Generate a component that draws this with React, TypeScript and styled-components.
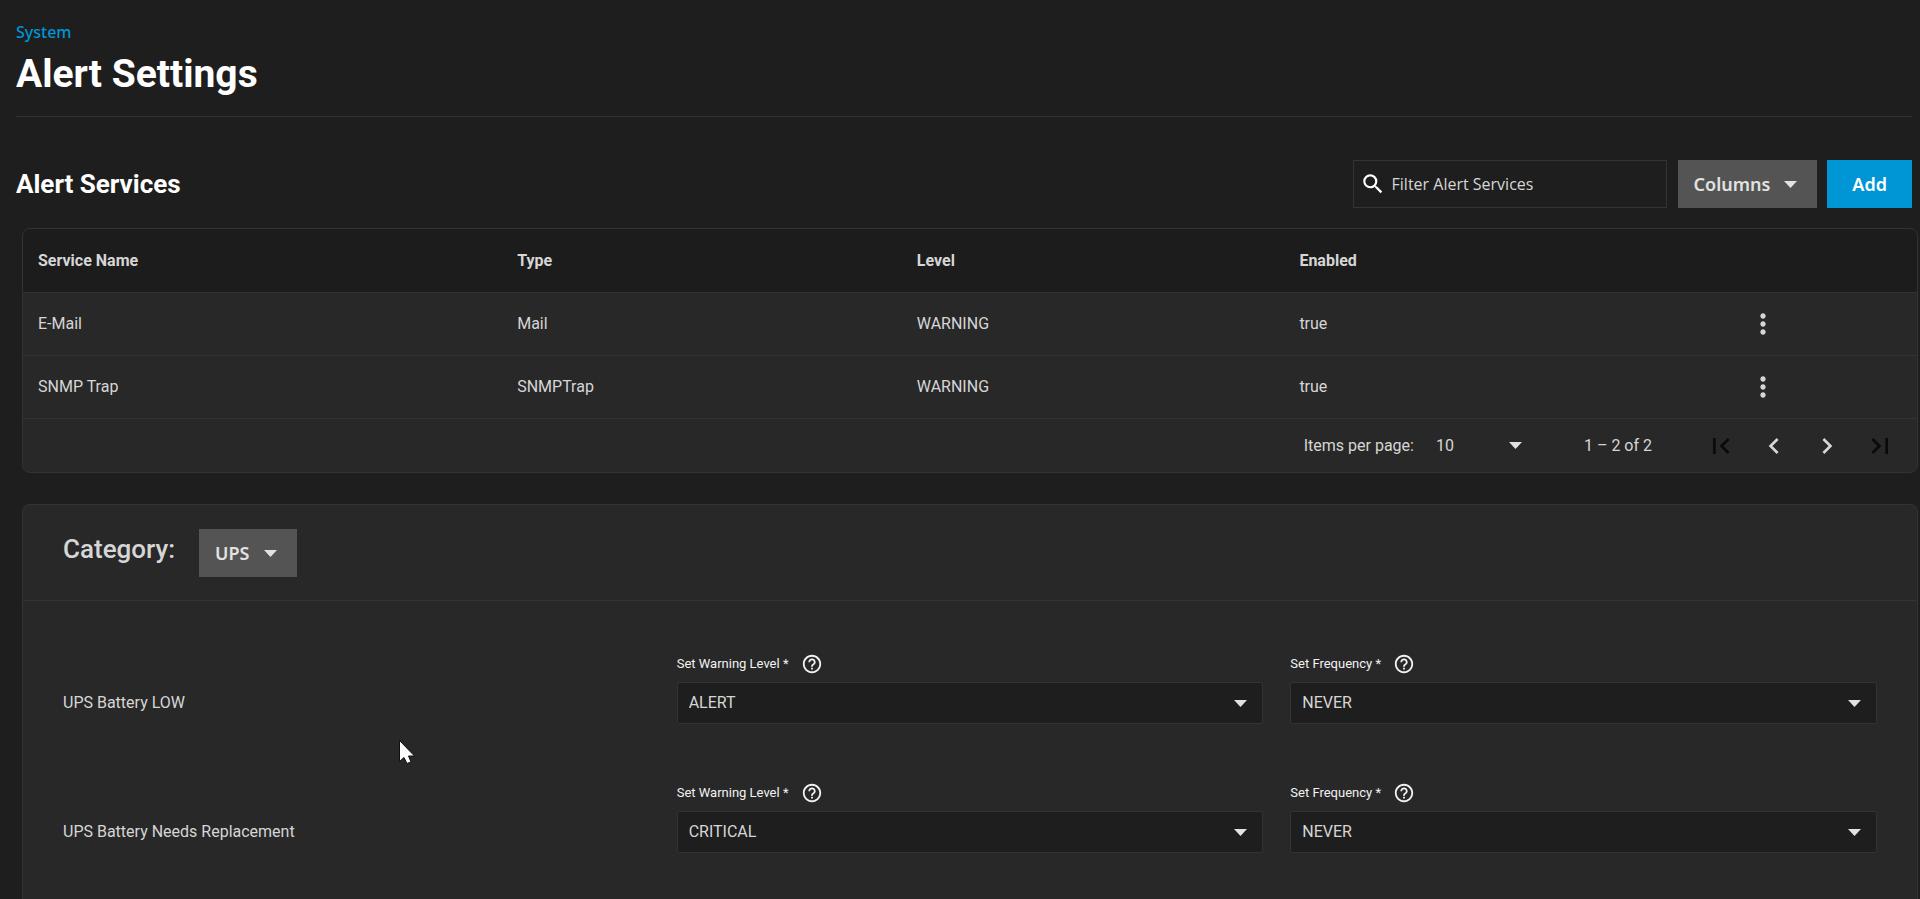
import React, { useId } from "react";
import styled, { createGlobalStyle } from "styled-components";
import {
  MdChevronLeft,
  MdChevronRight,
  MdFirstPage,
  MdHelpOutline,
  MdLastPage,
  MdMoreVert,
  MdSearch,
} from "react-icons/md";

const color = {
  page: "#1e1e1e",
  card: "#282828",
  head: "#1c1c1c",
  line: "#333333",
  text: "#d6d6d6",
  bright: "#ffffff",
  button: "#545454",
  primary: "#0095d5",
  disabled: "#0a0a0a",
};

const uiFont = `"Noto Sans", "Open Sans", sans-serif`;

const GlobalStyle = createGlobalStyle`
  * { box-sizing: border-box; }
  body {
    margin: 0;
    background: ${color.page};
    color: ${color.text};
    font: 16px/24px Roboto, sans-serif;
  }
  h1, h2, h3 { margin: 0; }
  button, select, input { font: inherit; color: inherit; margin: 0; }
  button, select { cursor: pointer; }
`;

const Page = styled.main`
  position: relative;
  display: flex;
  flex-direction: column;
  min-height: 100vh;
`;

const PageHeader = styled.header`
  display: flex;
  flex-direction: column;
  align-items: flex-start;
  margin: 0 8px 0 16px;
  padding: 20px 0 18px;
  border-bottom: 1px solid ${color.line};
`;

const Breadcrumb = styled.a`
  font-family: ${uiFont};
  font-weight: 500;
  color: ${color.primary};
  text-decoration: none;
`;

const PageTitle = styled.h1`
  padding-top: 6px;
  color: ${color.bright};
  font-size: 39px;
  line-height: 48px;
  font-weight: 700;
`;

const Toolbar = styled.div`
  display: flex;
  align-items: center;
  margin: 43px 8px 20px 16px;
`;

const SectionTitle = styled.h2`
  flex: 1;
  color: ${color.bright};
  font-size: 26px;
  line-height: 32px;
  font-weight: 700;
`;

const SearchBox = styled.label`
  display: flex;
  align-items: center;
  gap: 6px;
  width: 314px;
  height: 48px;
  margin-right: 11px;
  padding: 0 8px 0 6px;
  border: 1px solid ${color.line};
  color: ${color.bright};
`;

const SearchInput = styled.input`
  flex: 1;
  min-width: 0;
  padding: 0;
  border: 0;
  outline: 0;
  background: none;
  font-family: "Open Sans", "Noto Sans", sans-serif;
  &::placeholder {
    color: ${color.text};
    opacity: 1;
  }
`;

const ToolbarButton = styled.button<{ $primary?: boolean }>`
  display: flex;
  align-items: center;
  justify-content: space-between;
  height: 48px;
  padding: ${(p) => (p.$primary ? "0 25px" : "0 20px 0 16px")};
  margin-left: ${(p) => (p.$primary ? "10px" : "0")};
  gap: 14px;
  border: 0;
  background: ${(p) => (p.$primary ? color.primary : color.button)};
  color: ${(p) => (p.$primary ? color.bright : "#e2e2e2")};
  font-family: ${uiFont};
  font-size: 18px;
  font-weight: 600;
`;

const Cards = styled.div`
  flex: 1;
  display: flex;
  flex-direction: column;
  gap: 31px;
  margin: 0 2px 0 22px;
`;

const Card = styled.section<{ $fill?: boolean }>`
  border: 1px solid ${color.line};
  border-radius: ${(p) => (p.$fill ? "8px 8px 0 0" : "8px")};
  border-bottom-width: ${(p) => (p.$fill ? "0" : "1px")};
  flex: ${(p) => (p.$fill ? "1" : "none")};
  background: ${color.card};
  overflow: hidden;
`;

const Table = styled.table`
  width: 100%;
  table-layout: fixed;
  border-collapse: separate;
  border-spacing: 0;
  text-align: left;
`;

const HeadCell = styled.th<{ $width?: string }>`
  width: ${(p) => p.$width ?? "auto"};
  height: 64px;
  padding: 0 15px;
  border-bottom: 1px solid ${color.line};
  background: ${color.head};
  font-weight: 700;
`;

const Cell = styled.td`
  height: 63px;
  padding: 0 15px;
  border-bottom: 1px solid ${color.line};
`;

const IconButton = styled.button`
  display: flex;
  align-items: center;
  justify-content: center;
  width: 48px;
  height: 40px;
  padding: 0;
  border: 0;
  background: none;
`;

const PageButton = styled(IconButton)`
  width: 53px;
  &:disabled {
    color: ${color.disabled};
    cursor: default;
  }
`;

const Paginator = styled.nav`
  display: flex;
  align-items: center;
  justify-content: flex-end;
  height: 53px;
  padding-right: 11px;
`;

const PageSize = styled.label`
  display: flex;
  align-items: center;
  gap: 22px;
  margin-right: 62px;
`;

const PageRange = styled.span`
  margin-right: 42px;
`;

const SelectFrame = styled.span`
  display: grid;
  align-items: center;
  & > * {
    grid-area: 1 / 1;
  }
`;

const PlainSelect = styled.select`
  appearance: none;
  width: 86px;
  padding: 0;
  border: 0;
  outline: 0;
  background: none;
`;

const CategorySelect = styled.select`
  appearance: none;
  height: 48px;
  padding: 0 47px 0 16px;
  border: 0;
  border-radius: 0;
  outline: 0;
  background: ${color.button};
  color: #e2e2e2;
  font-family: ${uiFont};
  font-size: 18px;
  font-weight: 600;
`;

const FieldSelect = styled.select`
  appearance: none;
  width: 100%;
  height: 42px;
  padding: 0 40px 0 11px;
  border: 1px solid ${color.line};
  border-radius: 2px;
  outline: 0;
  background: ${color.page};
`;

const Caret = styled.svg<{ $inset: string }>`
  justify-self: end;
  width: 13px;
  height: 7px;
  margin-right: ${(p) => p.$inset};
  fill: #e2e2e2;
  pointer-events: none;
`;

const CategoryBar = styled.div`
  display: flex;
  align-items: flex-start;
  gap: 24px;
  padding: 24px 40px 23px;
  border-bottom: 1px solid ${color.line};
`;

const CategoryLabel = styled.label`
  font-size: 26px;
  line-height: 40px;
  font-weight: 500;
`;

const AlertList = styled.div`
  display: flex;
  flex-direction: column;
  gap: 58px;
  padding: 52px 40px 44px;
`;

const AlertRow = styled.div`
  display: grid;
  grid-template-columns: repeat(3, 1fr);
  column-gap: 27px;
  align-items: end;
`;

const AlertName = styled.h3`
  font-size: 16px;
  line-height: 42px;
  font-weight: 400;
`;

const Field = styled.div`
  display: flex;
  flex-direction: column;
  gap: 7px;
`;

const FieldLabel = styled.div`
  display: flex;
  align-items: center;
  gap: 12px;
  color: #f2f2f2;
  font-size: 13px;
  line-height: 22px;
`;

const HelpButton = styled.button`
  display: flex;
  padding: 0;
  border: 0;
  background: none;
`;

const Pointer = styled.svg`
  position: absolute;
  left: 398px;
  top: 739px;
  width: 18px;
  height: 26px;
  pointer-events: none;
`;

const DropCaret = ({ inset = "0" }: { inset?: string }) => (
  <Caret $inset={inset} viewBox="0 0 26 14" aria-hidden="true">
    <path d="M0 0h26L13 14z" />
  </Caret>
);

const columns = [
  { title: "Service Name", width: "25.3%" },
  { title: "Type", width: "21.1%" },
  { title: "Level", width: "20.2%" },
  { title: "Enabled", width: "23.2%" },
];

const services = [
  { name: "E-Mail", type: "Mail", level: "WARNING", enabled: "true" },
  { name: "SNMP Trap", type: "SNMPTrap", level: "WARNING", enabled: "true" },
];

const levels = ["INFO", "NOTICE", "WARNING", "ERROR", "CRITICAL", "ALERT", "EMERGENCY"];
const frequencies = ["IMMEDIATELY", "HOURLY", "DAILY", "NEVER"];

const alerts = [
  { name: "UPS Battery LOW", level: "ALERT", frequency: "NEVER" },
  { name: "UPS Battery Needs Replacement", level: "CRITICAL", frequency: "NEVER" },
];

function SelectField({ label, value, options }: { label: string; value: string; options: string[] }) {
  const id = useId();
  return (
    <Field>
      <FieldLabel>
        <label htmlFor={id}>{label} *</label>
        <HelpButton type="button" aria-label={`Help: ${label}`}>
          <MdHelpOutline size={22} />
        </HelpButton>
      </FieldLabel>
      <SelectFrame>
        <FieldSelect id={id} defaultValue={value} required>
          {options.map((option) => (
            <option key={option}>{option}</option>
          ))}
        </FieldSelect>
        <DropCaret inset="16px" />
      </SelectFrame>
    </Field>
  );
}

export default function App() {
  return (
    <Page>
      <GlobalStyle />
      <PageHeader>
        <Breadcrumb href="#system">System</Breadcrumb>
        <PageTitle>Alert Settings</PageTitle>
      </PageHeader>

      <Toolbar>
        <SectionTitle>Alert Services</SectionTitle>
        <SearchBox>
          <MdSearch size={26} aria-hidden="true" />
          <SearchInput type="text" aria-label="Filter Alert Services" placeholder="Filter Alert Services" />
        </SearchBox>
        <ToolbarButton type="button" aria-haspopup="menu">
          Columns
          <DropCaret />
        </ToolbarButton>
        <ToolbarButton type="button" $primary>
          Add
        </ToolbarButton>
      </Toolbar>

      <Cards>
        <Card>
          <Table>
            <thead>
              <tr>
                {columns.map((column) => (
                  <HeadCell key={column.title} scope="col" $width={column.width}>
                    {column.title}
                  </HeadCell>
                ))}
                <HeadCell as="td" />
              </tr>
            </thead>
            <tbody>
              {services.map((service) => (
                <tr key={service.name}>
                  <Cell>{service.name}</Cell>
                  <Cell>{service.type}</Cell>
                  <Cell>{service.level}</Cell>
                  <Cell>{service.enabled}</Cell>
                  <Cell>
                    <IconButton type="button" aria-label={`Actions for ${service.name}`}>
                      <MdMoreVert size={32} />
                    </IconButton>
                  </Cell>
                </tr>
              ))}
            </tbody>
          </Table>
          <Paginator aria-label="Alert services pages">
            <PageSize>
              Items per page:
              <SelectFrame>
                <PlainSelect defaultValue="10">
                  <option>10</option>
                  <option>25</option>
                  <option>50</option>
                  <option>100</option>
                </PlainSelect>
                <DropCaret />
              </SelectFrame>
            </PageSize>
            <PageRange>1 – 2 of 2</PageRange>
            <PageButton type="button" aria-label="First page" disabled>
              <MdFirstPage size={32} />
            </PageButton>
            <PageButton type="button" aria-label="Previous page">
              <MdChevronLeft size={32} />
            </PageButton>
            <PageButton type="button" aria-label="Next page">
              <MdChevronRight size={32} />
            </PageButton>
            <PageButton type="button" aria-label="Last page" disabled>
              <MdLastPage size={32} />
            </PageButton>
          </Paginator>
        </Card>

        <Card $fill>
          <CategoryBar>
            <CategoryLabel htmlFor="category">Category:</CategoryLabel>
            <SelectFrame>
              <CategorySelect id="category" defaultValue="UPS">
                <option>UPS</option>
              </CategorySelect>
              <DropCaret inset="20px" />
            </SelectFrame>
          </CategoryBar>
          <AlertList>
            {alerts.map((alert) => (
              <AlertRow key={alert.name}>
                <AlertName>{alert.name}</AlertName>
                <SelectField label="Set Warning Level" value={alert.level} options={levels} />
                <SelectField label="Set Frequency" value={alert.frequency} options={frequencies} />
              </AlertRow>
            ))}
          </AlertList>
        </Card>
      </Cards>

      <Pointer viewBox="0 0 36 52" aria-hidden="true">
        <path
          d="M3 3V45L12 37L18 49L26 46L21 34H33Z"
          fill="#ffffff"
          stroke="#101010"
          strokeWidth="2"
        />
      </Pointer>
    </Page>
  );
}
